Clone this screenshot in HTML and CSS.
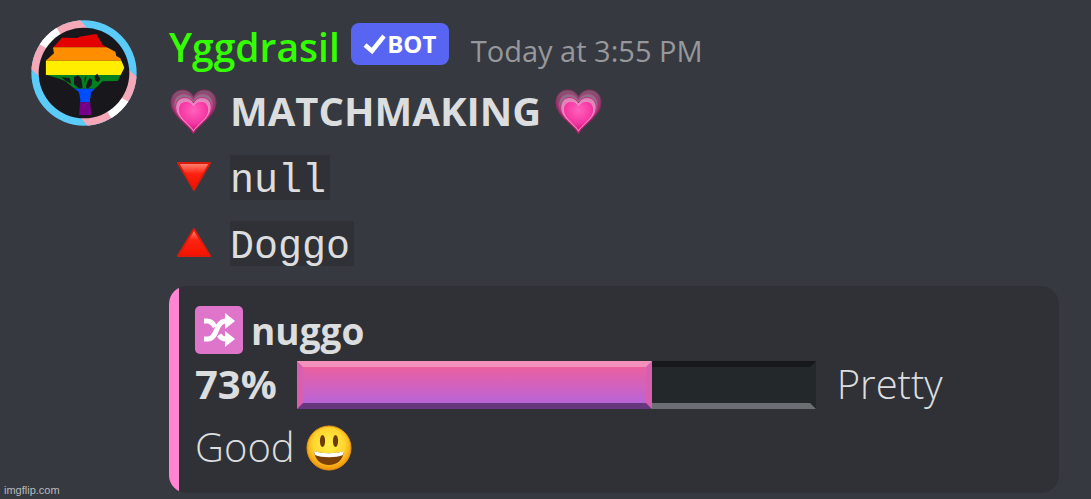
FILE: index.html
```
<!DOCTYPE html>
<html lang="en">
<head>
	<meta charset="utf-8">
	<title>Matchmaking</title>
	<link rel="stylesheet" href="styles.css">
</head>
<body>
	<!-- shared heart emoji -->
	<svg class="defs" width="0" height="0" aria-hidden="true">
		<defs>
			<radialGradient id="heartFill" cx="50%" cy="30%" r="75%">
				<stop offset="0" stop-color="#ff62bd"/>
				<stop offset="0.6" stop-color="#f536a2"/>
				<stop offset="1" stop-color="#cc0868"/>
			</radialGradient>
			<linearGradient id="heartBack" x1="0" y1="0" x2="0" y2="1">
				<stop offset="0" stop-color="#7d5a70"/>
				<stop offset="0.45" stop-color="#96306a"/>
				<stop offset="1" stop-color="#b8004d"/>
			</linearGradient>
			<path id="heartShape" d="M24 46C20 37 1 28 1 14C1 6 6 1 13 1C18 1 22 4 24 8C26 4 30 1 35 1C42 1 47 6 47 14C47 28 28 37 24 46Z"/>
			<symbol id="heart" viewBox="-1 -2 49 49">
				<use href="#heartShape" fill="url(#heartBack)" stroke="#8a2a60" stroke-width="1"/>
				<use href="#heartShape" fill="#8f6f86" stroke="#c02d7c" stroke-width="1" transform="translate(3 4) scale(0.87)"/>
				<use href="#heartShape" fill="#d98ab8" stroke="#c9187b" stroke-width="1" transform="translate(5 8) scale(0.79)"/>
				<use href="#heartShape" fill="url(#heartFill)" stroke="#ff9bd3" stroke-width="1" transform="translate(8 12) scale(0.67)"/>
			</symbol>
		</defs>
	</svg>

	<div class="message">
		<svg class="avatar" viewBox="35 29 318 318" role="img" aria-label="Yggdrasil avatar">
			<clipPath id="round"><circle cx="194" cy="188" r="158"/></clipPath>
			<g clip-path="url(#round)">
				<rect x="35" y="29" width="318" height="318" fill="#5bcbfa"/>
				<path fill="#f5a9b8" d="M20 162L64 202L210 62L176 20L20 20ZM368 214L324 174L178 314L212 356L368 356Z"/>
				<path fill="#fff" d="M50 96L92 120L130 82L106 42L50 42ZM338 280L296 256L258 294L282 334L338 334Z"/>
			</g>
			<circle cx="194" cy="188" r="136" fill="#18171b"/>
			<clipPath id="tree"><path d="M128 82L174 83L180 79L231 71L250 104L288 124L291 137L303 144L315 172L295 212L250 213L216 246L212 268L216 314L179 315L183 268L179 246L137 212L121 205L79 193L79 151L104 129L101 112Z"/></clipPath>
			<g clip-path="url(#tree)">
				<path fill="#e50000" d="M60 60H340V111H60Z"/>
				<path fill="#ff8d00" d="M60 111H340V151H60Z"/>
				<path fill="#ffee00" d="M60 151H340V194H60Z"/>
				<path fill="#028121" d="M60 194H340V235H60Z"/>
				<path fill="#004cff" d="M60 235H340V276H60Z"/>
				<path fill="#770088" d="M60 276H340V320H60Z"/>
			</g>
			<path fill="#18171b" d="M126 201L151 203L156 220L140 212ZM164 201L176 194L186 205L190 232L180 235L164 222ZM196 202L202 198L196 218ZM203 216L211 203L219 208L217 224L205 236L200 230ZM226 196L234 190L243 207L236 216L227 209Z"/>
		</svg>

		<div class="content">
			<div class="header">
				<span class="username">Yggdrasil</span>
				<span class="botTag">
					<svg class="check" viewBox="0 0 24 22" aria-hidden="true"><path d="M2 12L9 18L21 3" fill="none" stroke="#fff" stroke-width="4.5"/></svg>BOT
				</span>
				<span class="timestamp">Today at 3:55 PM</span>
			</div>

			<div class="line title">
				<svg class="emoji"><use href="#heart"/></svg>
				<b>MATCHMAKING</b>
				<svg class="emoji"><use href="#heart"/></svg>
			</div>
			<div class="line">
				<svg class="emoji" viewBox="0 0 48 48" aria-hidden="true">
					<linearGradient id="down" x1="0" y1="0" x2="0" y2="1">
						<stop offset="0" stop-color="#ff8a76"/>
						<stop offset="0.4" stop-color="#ff2010"/>
						<stop offset="1" stop-color="#ec1100"/>
					</linearGradient>
					<path d="M9 10H41L25 37Z" fill="url(#down)" stroke="#d91b0c" stroke-width="2" stroke-linejoin="round"/>
				</svg>
				<code>null</code>
			</div>
			<div class="line">
				<svg class="emoji" viewBox="0 0 48 48" aria-hidden="true">
					<linearGradient id="up" x1="0" y1="0" x2="0" y2="1">
						<stop offset="0" stop-color="#ff9a88"/>
						<stop offset="0.4" stop-color="#ff2412"/>
						<stop offset="1" stop-color="#f41200"/>
					</linearGradient>
					<path d="M9 37H41L25 10Z" fill="url(#up)" stroke="#e01a0a" stroke-width="2" stroke-linejoin="round"/>
				</svg>
				<code>Doggo</code>
			</div>

			<div class="embed">
				<div class="pairName">
					<svg class="emoji" viewBox="0 0 48 48" aria-hidden="true">
						<rect width="48" height="48" rx="5" fill="#df75cb"/>
						<path d="M9 15H12C16 15 18 17 20 21M9 33H13C23 33 20 15 31 15M24 29C26 32 28 33 31 33" fill="none" stroke="#fff" stroke-width="5"/>
						<path fill="#fff" d="M30 7L40 15L30 23ZM30 25L40 33L30 41Z"/>
					</svg>
					<b>nuggo</b>
				</div>
				<p class="score">
					<b>73%</b>
					<span class="bar"><span class="barFill"></span></span>
					Pretty Good
					<svg class="emoji" viewBox="0 0 48 48" role="img" aria-label="smile">
						<radialGradient id="face" cx="50%" cy="42%" r="55%">
							<stop offset="0" stop-color="#fff04a"/>
							<stop offset="0.65" stop-color="#ffd62e"/>
							<stop offset="1" stop-color="#f39a10"/>
						</radialGradient>
						<circle cx="24" cy="24" r="22" fill="url(#face)" stroke="#e8930f" stroke-width="1"/>
						<ellipse cx="17.500" cy="17" rx="2.600" ry="6" fill="#6b3b08"/>
						<ellipse cx="30.500" cy="17" rx="2.600" ry="6" fill="#6b3b08"/>
						<path d="M9 27C17 30 31 30 39 27C38 36 32 41 24 41C16 41 10 36 9 27Z" fill="#7c3f06"/>
						<path d="M9 27C17 30 31 30 39 27L38 31C31 34 17 34 10 31Z" fill="#fff"/>
					</svg>
				</p>
			</div>
		</div>
	</div>
	<div class="watermark">imgflip.com</div>
</body>
</html>
```
FILE: styles.css
```
* {
	box-sizing: border-box;
}
body {
	margin: 0;
	background: #36393f;
	color: #dcddde;
	font-family: "Open Sans", "Noto Sans", sans-serif;
	font-size: 40px;
}
.defs {
	position: absolute;
}
.message {
	display: flex;
	gap: 32px;
	padding: 20px 32px 6px 31px;
}
.avatar {
	width: 106px;
	height: 106px;
	flex: none;
}
.content {
	flex: 1;
	min-width: 0;
}
.header {
	display: flex;
	align-items: center;
	height: 58px;
	padding-bottom: 10px;
	line-height: 48px;
	white-space: nowrap;
}
.username {
	color: #33ff00;
	font-size: 39px;
	font-weight: 600;
	padding-top: 6px;
}
.botTag {
	display: flex;
	align-items: center;
	justify-content: center;
	width: 98px;
	height: 42px;
	margin: 0 22px 0 11px;
	border-radius: 8px;
	background: #5865f2;
	color: #fff;
	font-size: 24px;
	font-weight: bold;
}
.check {
	width: 24px;
	height: 22px;
}
.timestamp {
	color: #96989d;
	font-size: 29px;
	padding-top: 14px;
}
.line {
	display: flex;
	align-items: center;
	gap: 13px;
	height: 66px;
}
.title {
	line-height: 48px;
}
.emoji {
	width: 48px;
	height: 48px;
	flex: none;
}
code {
	height: 45px;
	padding-right: 4px;
	line-height: 54px;
	background: #2f3136;
	font-family: "Courier New", "Liberation Mono", monospace;
	font-size: 40px;
}
.embed {
	margin-top: 10px;
	padding: 20px 40px 15px 26px;
	border-radius: 18px;
	background: linear-gradient(to right, #ff85d2 10px, #2f3136 10px);
}
.pairName {
	display: flex;
	align-items: center;
	gap: 8px;
	height: 48px;
	font-size: 37px;
}
.score {
	margin: -2px 0 0;
	line-height: 63px;
	font-weight: 300;
}
.score b {
	font-weight: 700;
}
.score .emoji {
	vertical-align: -10px;
}
.bar {
	display: inline-block;
	position: relative;
	width: 63%;
	height: 48px;
	margin: 0 10px;
	vertical-align: -10px;
	border: 6px solid;
	border-color: #17181c #23282b #6b6e73 #23282b;
	background: #23282b;
}
/* covers the frame of the empty bar */
.barFill {
	position: absolute;
	top: -6px;
	bottom: -6px;
	left: -6px;
	width: 70%;
	border: 6px solid;
	border-color: #f391bd #d85fb0 #66377e #d85fb0;
	background: linear-gradient(#eb60a0, #b964d8);
}
.watermark {
	position: absolute;
	left: 4px;
	bottom: 3px;
	color: #b9bbbe;
	font-family: "Liberation Sans", Arial, sans-serif;
	font-size: 11px;
}
```
